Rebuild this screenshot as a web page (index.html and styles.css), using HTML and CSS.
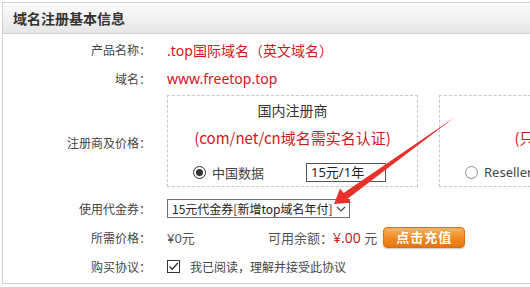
FILE: index.html
```html
<!DOCTYPE html>
<html lang="zh-CN">
<head>
<meta charset="UTF-8">
<title>域名注册</title>
<link rel="stylesheet" href="styles.css">
</head>
<body>
    <div class="panel">
        <div class="panel-head">域名注册基本信息</div>
        <div class="panel-body">
            <div class="row">
                <div class="label">产品名称：</div>
                <div class="value red big">.top国际域名（英文域名）</div>
            </div>
            <div class="row">
                <div class="label">域名：</div>
                <div class="value red big">www.freetop.top</div>
            </div>
            <div class="row row-reg">
                <div class="label">注册商及价格：</div>
                <div class="value regs">
                    <div class="reg-box">
                        <div class="reg-title">国内注册商</div>
                        <div class="reg-note">(com/net/cn域名需实名认证)</div>
                        <div class="reg-opt">
                            <span class="radio on"></span>
                            <span class="reg-name">中国数据</span>
                            <span class="price">15元/1年</span>
                        </div>
                    </div>
                    <div class="reg-box">
                        <div class="reg-title">国外注册商</div>
                        <div class="reg-note">(只限英文域名)</div>
                        <div class="reg-opt">
                            <span class="radio"></span>
                            <span class="reg-name">Reseller</span>
                        </div>
                    </div>
                </div>
            </div>
            <div class="row row-coupon">
                <div class="label">使用代金券：</div>
                <div class="value">
                    <div class="select">
                        <span>15元代金券[新增top域名年付]</span>
                        <svg width="10" height="6" viewBox="0 0 10 6"><path d="M1 1 L5 5 L9 1" fill="none" stroke="#444" stroke-width="1.2"/></svg>
                    </div>
                </div>
            </div>
            <div class="row">
                <div class="label">所需价格：</div>
                <div class="value">
                    <span class="need">¥0元</span>
                    <span class="balance">可用余额：<em class="red">¥.00</em> 元</span>
                    <button class="btn-pay">点击充值</button>
                </div>
            </div>
            <div class="row">
                <div class="label">购买协议：</div>
                <div class="value">
                    <span class="check">
                        <svg width="11" height="11" viewBox="0 0 11 11"><path d="M1.5 5.5 L4.3 8.3 L9.8 2" fill="none" stroke="#333" stroke-width="1.3"/></svg>
                    </span>
                    <span class="agree">我已阅读，理解并接受此协议</span>
                </div>
            </div>
        </div>
    </div>

    <!-- annotation arrow drawn over the form -->
    <svg class="arrow" width="530" height="287" viewBox="0 0 530 287">
        <polygon points="334,204 340,188.5 343.6,193 455,117 347.6,198.8 351,202.8" fill="#e8312b"/>
    </svg>
</body>
</html>
```

FILE: styles.css
```css
body {
    margin: 0;
    overflow: hidden;
    font-family: "Noto Sans", "Noto Sans CJK SC", sans-serif;
    color: #333;
    background-color: #fff;
}
.panel {
    margin: 2px 0 0 2px;
    width: 800px;
    border: 1px solid #d0d0d0;
    border-right: none;
}
.panel-head {
    height: 30px;
    line-height: 31px;
    padding-left: 10px;
    font-size: 14px;
    font-weight: bold;
    color: #333;
    background: linear-gradient(#fbfbfb, #f3f3f3 40%, #e6e6e6);
    border-bottom: 1px solid #cfcfcf;
}
.panel-body {
    padding: 1px 0 2px;
}
.row {
    display: flex;
    align-items: center;
    height: 29px;
}
.label {
    width: 148px;
    flex: none;
    text-align: right;
    font-size: 12px;
    color: #444;
}
.value {
    display: flex;
    align-items: center;
    padding-left: 16px;
    font-size: 13px;
    color: #555;
    white-space: nowrap;
}
.red {
    color: #d3151d;
}
.big {
    font-size: 14px;
}

.row-reg {
    height: 92px;
    margin-top: 2px;
}
.row-reg .label {
    padding-top: 4px;
}
.regs {
    gap: 21px;
}
.reg-box {
    box-sizing: border-box;
    width: 251px;
    height: 92px;
    border: 1px dashed #c8c8c8;
    text-align: center;
}
.reg-title {
    margin-top: 5px;
    line-height: 20px;
    font-size: 14px;
    color: #333;
}
.reg-note {
    margin-top: 5px;
    line-height: 24px;
    font-family: "Noto Sans CJK SC", sans-serif;
    font-size: 15px;
    color: #d3151d;
}
.reg-opt {
    display: flex;
    align-items: center;
    height: 20px;
    margin-top: 12px;
    padding-left: 25px;
    text-align: left;
}
.radio {
    box-sizing: border-box;
    width: 13px;
    height: 13px;
    border: 1px solid #8f8f8f;
    border-radius: 50%;
    background: #fff;
    position: relative;
}
.radio.on {
    border-color: #333;
}
.radio.on::after {
    content: "";
    position: absolute;
    left: 2px;
    top: 2px;
    width: 7px;
    height: 7px;
    border-radius: 50%;
    background: #333;
}
.reg-name {
    width: 94px;
    margin-left: 6px;
    font-size: 13px;
    color: #444;
}
.price {
    box-sizing: border-box;
    width: 80px;
    height: 19px;
    line-height: 17px;
    padding-left: 4px;
    border: 1px solid #555;
    font-size: 13px;
    color: #222;
}

.row-coupon {
    margin-top: 7px;
}
.select {
    box-sizing: border-box;
    display: flex;
    align-items: center;
    justify-content: space-between;
    width: 183px;
    height: 19px;
    padding: 0 3px 0 4px;
    border: 1px solid #707070;
    font-family: "Noto Sans CJK SC", sans-serif;
    font-size: 12px;
    color: #222;
}
.select svg {
    flex: none;
}
.need {
    width: 101px;
}
.balance em {
    font-style: normal;
    font-size: 14px;
}
.btn-pay {
    box-sizing: border-box;
    width: 82px;
    height: 21px;
    margin-left: 6px;
    padding: 0;
    border: 1px solid #d9700f;
    border-radius: 4px;
    background: linear-gradient(#fbb25e, #f28a22 55%, #e57412);
    box-shadow: 0 1px 1px rgba(0, 0, 0, 0.2);
    color: #fff;
    font-family: inherit;
    font-size: 13px;
    font-weight: bold;
    letter-spacing: 1px;
    line-height: 19px;
}
.check {
    box-sizing: border-box;
    display: flex;
    align-items: center;
    justify-content: center;
    width: 13px;
    height: 13px;
    border: 1px solid #333;
}
.agree {
    margin-left: 10px;
    font-size: 12px;
    color: #444;
}
.arrow {
    position: absolute;
    left: 0;
    top: 0;
    pointer-events: none;
}
```
